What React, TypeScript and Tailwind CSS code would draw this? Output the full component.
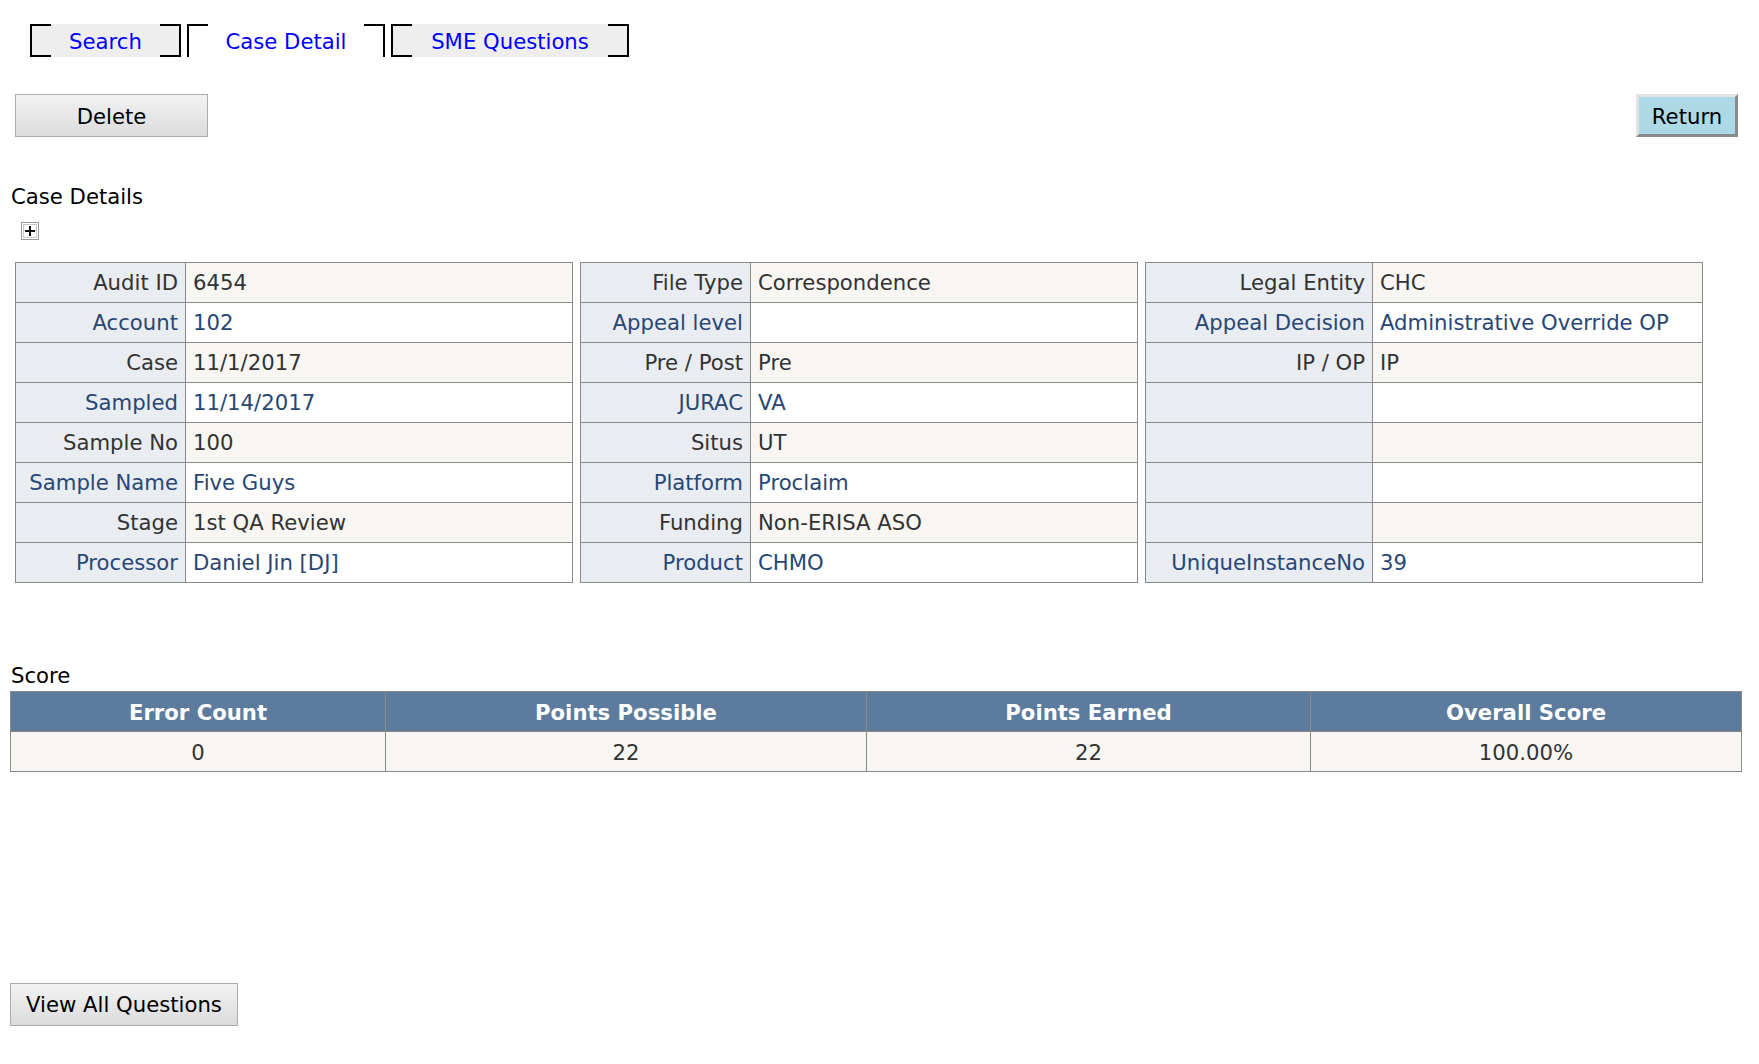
import React from "react";

type Row = { label: string; value: string };

const t1: Row[] = [
  { label: "Audit ID", value: "6454" },
  { label: "Account", value: "102" },
  { label: "Case", value: "11/1/2017" },
  { label: "Sampled", value: "11/14/2017" },
  { label: "Sample No", value: "100" },
  { label: "Sample Name", value: "Five Guys" },
  { label: "Stage", value: "1st QA Review" },
  { label: "Processor", value: "Daniel Jin [DJ]" },
];
const t2: Row[] = [
  { label: "File Type", value: "Correspondence" },
  { label: "Appeal level", value: "" },
  { label: "Pre / Post", value: "Pre" },
  { label: "JURAC", value: "VA" },
  { label: "Situs", value: "UT" },
  { label: "Platform", value: "Proclaim" },
  { label: "Funding", value: "Non-ERISA ASO" },
  { label: "Product", value: "CHMO" },
];
const t3: Row[] = [
  { label: "Legal Entity", value: "CHC" },
  { label: "Appeal Decision", value: "Administrative Override OP" },
  { label: "IP / OP", value: "IP" },
  { label: "", value: "" },
  { label: "", value: "" },
  { label: "", value: "" },
  { label: "", value: "" },
  { label: "UniqueInstanceNo", value: "39" },
];

function DetailTable({ rows, labelW }: { rows: Row[]; labelW: string }) {
  return (
    <table className="w-[558px] border-collapse border border-[#8a8a8a] table-fixed">
      <colgroup>
        <col className={labelW} />
        <col />
      </colgroup>
      <tbody>
        {rows.map((r, i) => {
          const odd = i % 2 === 0;
          return (
            <tr key={i} className={`h-[40px] ${odd ? "text-[#333333]" : "text-[#284775]"}`}>
              <td className="border border-[#8a8a8a] bg-[#E9ECF1] text-right px-[7px] pt-[1px] pb-0 whitespace-nowrap">
                {r.label}
              </td>
              <td
                className={`border border-[#8a8a8a] px-[7px] pt-[1px] pb-0 whitespace-nowrap ${
                  odd ? "bg-[#F7F6F3]" : "bg-white"
                }`}
              >
                {r.value}
              </td>
            </tr>
          );
        })}
      </tbody>
    </table>
  );
}

function Tab({ label, active, w }: { label: string; active?: boolean; w: string }) {
  return (
    <div
      className={`relative h-[33px] ${w} flex items-center justify-center border-x-2 border-black text-[#0000ff] ${
        active ? "bg-white" : "bg-[#eeeeee]"
      }`}
    >
      <span className="absolute left-0 top-0 w-[19px] h-[2px] bg-black" />
      <span className="absolute right-0 top-0 w-[19px] h-[2px] bg-black" />
      {!active && <span className="absolute left-0 bottom-0 w-[19px] h-[2px] bg-black" />}
      {!active && <span className="absolute right-0 bottom-0 w-[19px] h-[2px] bg-black" />}
      <span className="leading-none pt-[3px]">{label}</span>
    </div>
  );
}

export default function App() {
  return (
    <div className="min-h-[1064px] w-[1759px] bg-white text-black text-[21.2px] leading-[26px] font-['DejaVu_Sans','Verdana',sans-serif] pl-[10px] pr-[17px]">
      {/* Tabs */}
      <div className="pt-[24px] pl-[20px] flex gap-[6px]">
        <Tab label="Search" w="w-[151px]" />
        <Tab label="Case Detail" w="w-[198px]" active />
        <Tab label="SME Questions" w="w-[238px]" />
      </div>

      {/* Buttons */}
      <div className="mt-[37px] flex items-start justify-between">
        <button className="ml-[5px] w-[193px] h-[43px] pt-[2px] border border-[#acacac] bg-linear-to-b from-[#f2f2f2] to-[#dcdcdc] text-black">
          Delete
        </button>
        <button className="mr-[4px] w-[102px] h-[43px] pt-[2px] bg-[#add8e6] border-[3px] border-t-[#e3e3e3] border-l-[#e3e3e3] border-b-[#8a8a8a] border-r-[#8a8a8a] text-black">
          Return
        </button>
      </div>

      {/* Case details */}
      <div className="mt-[47px] pl-[1px]">Case Details</div>
      <div className="mt-[12px] ml-[11px] w-[18px] h-[18px] border border-[#9a9a9a] p-[1px]">
        <div className="w-full h-full border border-[#c8c8c8] bg-white flex items-center justify-center">
          <svg width="10" height="10" viewBox="0 0 10 10">
            <rect x="4" y="0" width="2" height="10" fill="#111" />
            <rect x="0" y="4" width="10" height="2" fill="#111" />
          </svg>
        </div>
      </div>

      <div className="mt-[22px] ml-[5px] flex gap-[7px] items-start">
        <DetailTable rows={t1} labelW="w-[170px]" />
        <DetailTable rows={t2} labelW="w-[170px]" />
        <DetailTable rows={t3} labelW="w-[227px]" />
      </div>

      {/* Score */}
      <div className="mt-[80px] pl-[1px]">Score</div>
      <table className="mt-[2px] w-[1732px] border-collapse border border-[#8a8a8a] table-fixed">
        <colgroup>
          <col className="w-[375px]" />
          <col className="w-[481px]" />
          <col className="w-[444px]" />
          <col />
        </colgroup>
        <thead>
          <tr className="h-[40px] bg-[#5D7B9D] text-white font-bold">
            <th className="border border-[#8a8a8a] font-bold pt-[2px] pb-0">Error Count</th>
            <th className="border border-[#8a8a8a] font-bold pt-[2px] pb-0">Points Possible</th>
            <th className="border border-[#8a8a8a] font-bold pt-[2px] pb-0">Points Earned</th>
            <th className="border border-[#8a8a8a] font-bold pt-[2px] pb-0">Overall Score</th>
          </tr>
        </thead>
        <tbody>
          <tr className="h-[40px] bg-[#F7F6F3] text-[#333333] text-center">
            <td className="border border-[#8a8a8a] pt-[2px] pb-0">0</td>
            <td className="border border-[#8a8a8a] pt-[2px] pb-0">22</td>
            <td className="border border-[#8a8a8a] pt-[2px] pb-0">22</td>
            <td className="border border-[#8a8a8a] pt-[2px] pb-0">100.00%</td>
          </tr>
        </tbody>
      </table>

      <button className="mt-[211px] w-[228px] h-[43px] pt-[1px] border border-[#acacac] bg-linear-to-b from-[#f2f2f2] to-[#dcdcdc] text-black">
        View All Questions
      </button>
    </div>
  );
}
